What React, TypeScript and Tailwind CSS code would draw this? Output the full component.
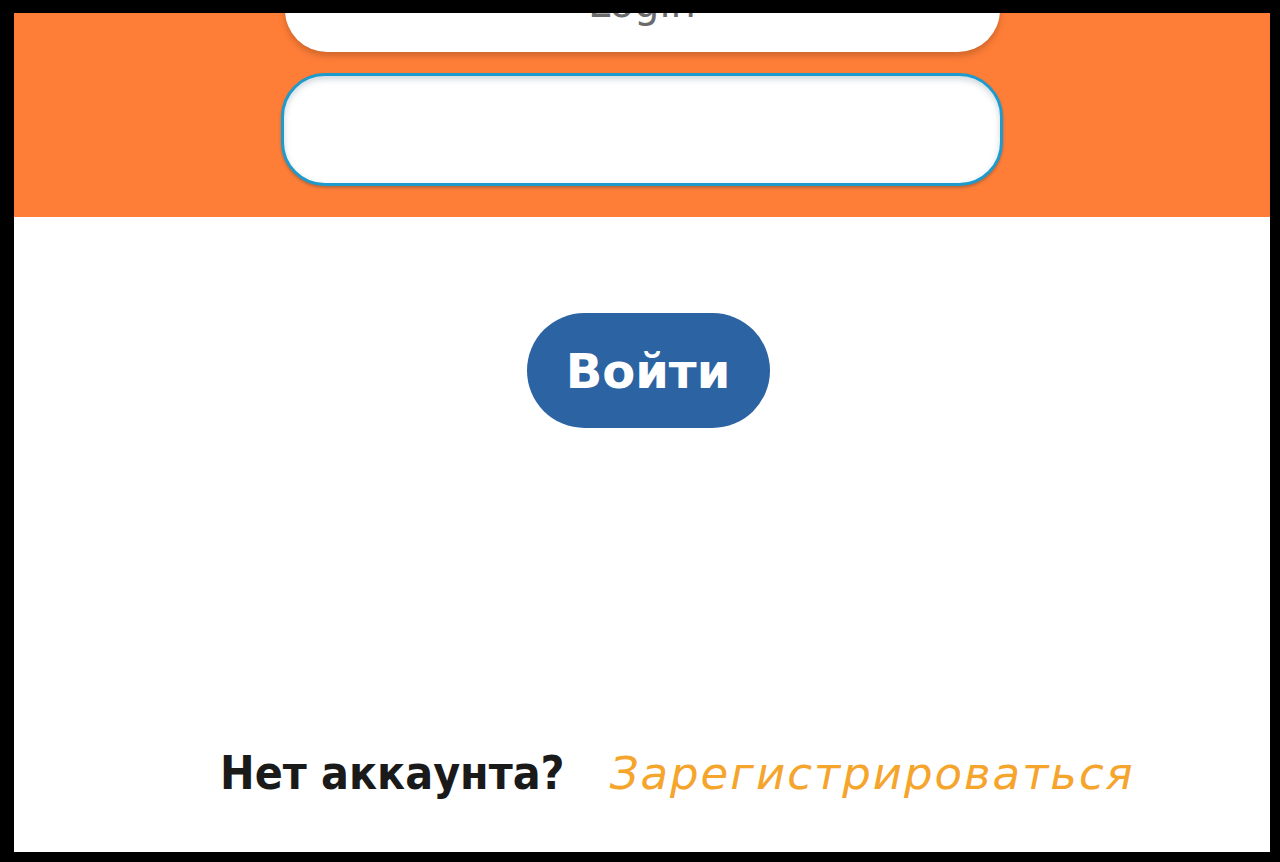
import React from 'react';

const App: React.FC = () => {
  return (
    <div className="w-[1280px] h-[862px] bg-black pt-[13px] pl-[14px] pr-[10px] pb-[10px]">
      <div className="w-full h-full bg-white overflow-hidden flex flex-col">
        {/* Orange header with login fields */}
        <section className="h-[204px] shrink-0 bg-[#fe7e38] flex flex-col items-center">
          <div className="mt-[-62px] w-[715px] h-[101px] bg-white rounded-[42px] shadow-[0_4px_6px_rgba(120,60,20,0.35)] flex items-end justify-center pb-[29px]">
            <span className="text-[40px] leading-none text-[#6b6b6b] font-['DejaVu_Sans',sans-serif]">
              Login
            </span>
          </div>
          <div className="mt-[21px] w-[722px] h-[113px] bg-white rounded-[44px] border-[3px] border-[#1e9bcd] shadow-[inset_0_3px_6px_rgba(60,90,110,0.25),0_2px_3px_rgba(60,60,60,0.35)]" />
        </section>

        {/* Submit */}
        <div className="flex justify-center pl-[12px] mt-[96px]">
          <button className="w-[243px] h-[115px] rounded-full bg-[#2c63a2] text-white text-[48px] font-bold font-['DejaVu_Sans',sans-serif]">
            Войти
          </button>
        </div>

        {/* Register link */}
        <div className="mt-auto mb-[44px] pl-[206px] flex items-baseline gap-[45px]">
          <span className="text-[46px] font-bold text-[#1a1a1a] font-['DejaVu_Sans_Condensed','DejaVu_Sans',sans-serif]">
            Нет аккаунта?
          </span>
          <a href="#" className="text-[45px] italic tracking-[2px] text-[#f5a42c] font-['DejaVu_Sans',sans-serif]">
            Зарегистрироваться
          </a>
        </div>
      </div>
    </div>
  );
};

export default App;
